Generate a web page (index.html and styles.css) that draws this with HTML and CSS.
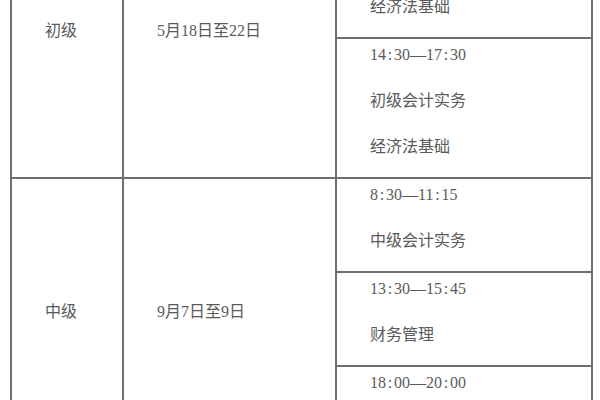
FILE: index.html
```html
<!DOCTYPE html>
<html lang="zh-CN">
<head>
<meta charset="utf-8">
<title>考试时间安排</title>
<link rel="stylesheet" href="styles.css">
</head>
<body>
<div class="viewport">
  <table class="schedule">
    <colgroup>
      <col class="col-level">
      <col class="col-date">
      <col class="col-time">
    </colgroup>
    <tbody>
      <tr>
        <td class="merged" rowspan="2">初级</td>
        <td class="merged" rowspan="2">5月18日至22日</td>
        <td class="slot">
          <p>8<span class="colon">:</span>30—11<span class="colon">:</span>00</p>
          <p>初级会计实务</p>
          <p>经济法基础</p>
        </td>
      </tr>
      <tr>
        <td class="slot">
          <p>14<span class="colon">:</span>30—17<span class="colon">:</span>30</p>
          <p>初级会计实务</p>
          <p>经济法基础</p>
        </td>
      </tr>
      <tr>
        <td class="merged" rowspan="3">中级</td>
        <td class="merged" rowspan="3">9月7日至9日</td>
        <td class="slot">
          <p>8<span class="colon">:</span>30—11<span class="colon">:</span>15</p>
          <p>中级会计实务</p>
        </td>
      </tr>
      <tr>
        <td class="slot">
          <p>13<span class="colon">:</span>30—15<span class="colon">:</span>45</p>
          <p>财务管理</p>
        </td>
      </tr>
      <tr>
        <td class="slot">
          <p>18<span class="colon">:</span>00—20<span class="colon">:</span>00</p>
          <p>经济法</p>
        </td>
      </tr>
    </tbody>
  </table>
</div>
</body>
</html>
```

FILE: styles.css
```css
html, body {
  margin: 0;
  padding: 0;
  background: #ffffff;
}

.viewport {
  width: 600px;
  height: 400px;
  overflow: hidden;
}

.schedule {
  margin-top: -103px;
  margin-left: 10px;
  width: 581px;
  table-layout: fixed;
  border-collapse: collapse;
  font-family: "Liberation Serif", "Noto Sans CJK SC", serif;
  font-size: 16px;
  color: #5a5a5a;
}

.col-level { width: 112px; }
.col-date { width: 213px; }
.col-time { width: 256px; }

.schedule td {
  border: 2px solid #6f6f6f;
  padding: 0 0 0 33px;
  text-align: left;
}

.merged {
  vertical-align: middle;
  padding-bottom: 14px !important;
  line-height: 20px;
}

.slot {
  vertical-align: top;
  padding-top: 6px !important;
  padding-bottom: 20px !important;
}

.slot p {
  margin: 0 0 26px 0;
  line-height: 20px;
}

.slot p:last-child {
  margin-bottom: 0;
}

.colon {
  display: inline-block;
  width: 8px;
  text-align: center;
}
```
